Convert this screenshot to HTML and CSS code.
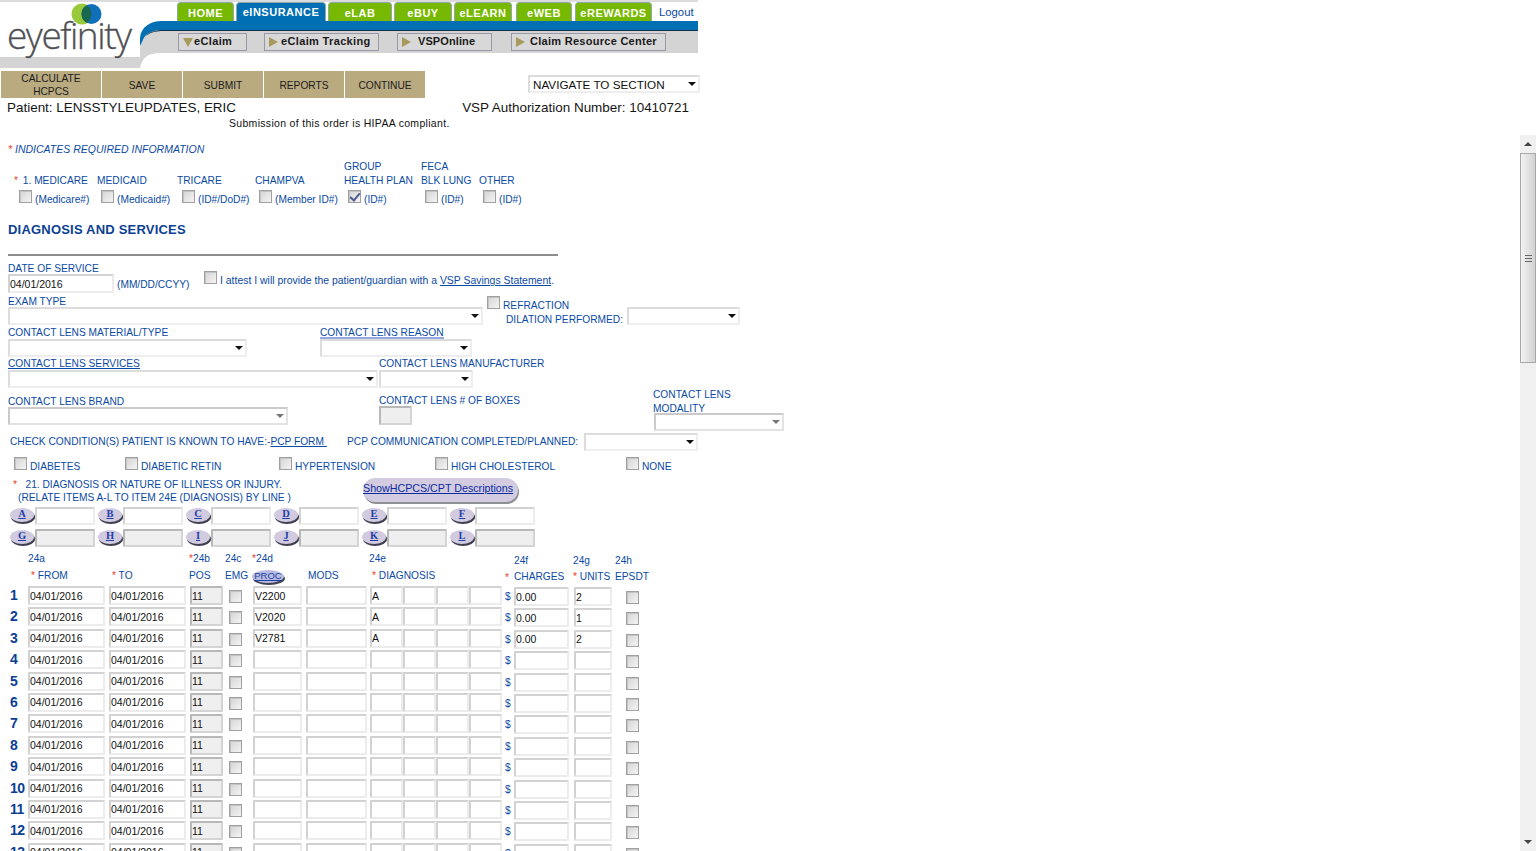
FILE: index.html
```html
<!DOCTYPE html>
<html lang="en">
<head>
    <meta charset="UTF-8">
    <title>eInsurance - Diagnosis and Services</title>
    <link rel="stylesheet" href="styles.css">
</head>
<body>
    <!-- Header -->
    <header class="header">
        <svg class="swoosh" width="698" height="68" viewBox="0 0 698 68">
            <path fill="#d4d4d4" d="M0 57H136L140 57V68H0Z"/>
            <path fill="#d4d4d4" d="M140 68C142 58 148 53 160 53H698V30H160C148 30 140 38 140 50Z"/>
            <path fill="#006fb4" d="M140 38C141 27 150 21 162 21H698V30H164C152 30 145 33 142 42L140 46Z"/>
            <path fill="#10304a" d="M145 37C149 32 154 30 164 30H698V31H164C154 31 149 33 145 37Z"/>
        </svg>
        <div class="logo">
            <svg class="logo-rings" width="32" height="22" viewBox="0 0 32 22">
                <circle cx="11" cy="11" r="10.5" fill="#9aca3c"/>
                <circle cx="20.5" cy="11" r="10" fill="#0f6fb8"/>
                <path fill="#17684f" d="M15.7 2.2A10.5 10.5 0 0 1 15.7 19.8A10 10 0 0 1 15.7 2.2Z"/>
            </svg>
            <span class="logo-text">eyefinity</span>
        </div>
        <div class="nav">
            <ul class="tabs">
                <li class="tab t-home">HOME</li>
                <li class="tab t-ins active">eINSURANCE</li>
                <li class="tab t-lab">eLAB</li>
                <li class="tab t-buy">eBUY</li>
                <li class="tab t-learn">eLEARN</li>
                <li class="tab t-web">eWEB</li>
                <li class="tab t-rew">eREWARDS</li>
                <li class="logout">Logout</li>
            </ul>
            <div class="subnav">
                <a class="subbtn s-claim"><i class="tri-down"></i>eClaim</a>
                <a class="subbtn s-track"><i class="tri-right"></i>eClaim Tracking</a>
                <a class="subbtn s-vsp"><i class="tri-right"></i>VSP Online</a>
                <a class="subbtn s-res"><i class="tri-right"></i>Claim Resource Center</a>
            </div>
        </div>
    </header>

    <!-- Toolbar -->
    <div class="toolbar">
        <button class="tool">CALCULATE<br>HCPCS</button>
        <button class="tool">SAVE</button>
        <button class="tool">SUBMIT</button>
        <button class="tool">REPORTS</button>
        <button class="tool">CONTINUE</button>
        <span class="sel sel-nav"><select><option>NAVIGATE TO SECTION</option></select></span>
    </div>

    <div class="patient">
        <span>Patient: LENSSTYLEUPDATES, ERIC</span>
        <span>VSP Authorization Number: 10410721</span>
    </div>
    <div class="notice">Submission of this order is HIPAA compliant.</div>

    <div class="required"><b>*</b> INDICATES REQUIRED INFORMATION</div>

    <!-- Insurance type -->
    <div class="ins-types">
        <div class="ins c1"><label><b>*</b> 1. MEDICARE</label><span><input type="checkbox"> (Medicare#)</span></div>
        <div class="ins c2"><label>MEDICAID</label><span><input type="checkbox"> (Medicaid#)</span></div>
        <div class="ins c3"><label>TRICARE</label><span><input type="checkbox"> (ID#/DoD#)</span></div>
        <div class="ins c4"><label>CHAMPVA</label><span><input type="checkbox"> (Member ID#)</span></div>
        <div class="ins c5"><label>GROUP<br>HEALTH PLAN</label><span><input type="checkbox" checked> (ID#)</span></div>
        <div class="ins c6"><label>FECA<br>BLK LUNG</label><span><input type="checkbox"> (ID#)</span></div>
        <div class="ins c7"><label>OTHER</label><span><input type="checkbox"> (ID#)</span></div>
    </div>

    <h2 class="section-title">DIAGNOSIS AND SERVICES</h2>
    <hr class="rule">

    <div class="f-date">
        <div class="date-col">
            <label>DATE OF SERVICE</label>
            <div class="date-line"><input class="txt date-in" value="04/01/2016"><span class="hint">(MM/DD/CCYY)</span></div>
        </div>
        <div class="attest"><input type="checkbox"> <span>I attest I will provide the patient/guardian with a <a>VSP Savings Statement</a>.</span></div>
    </div>

    <div class="f-exam">
        <div class="exam-col">
            <label>EXAM TYPE</label>
            <span class="sel sel-exam"><select></select></span>
        </div>
        <div class="refr-col">
            <div class="refr-top"><input type="checkbox"> <span>REFRACTION</span></div>
            <div class="refr-bot">DILATION PERFORMED:</div>
        </div>
        <span class="sel sel-dil"><select></select></span>
    </div>

    <div class="f-mat">
        <div class="mat-col">
            <label>CONTACT LENS MATERIAL/TYPE</label>
            <span class="sel sel-mat"><select></select></span>
        </div>
        <div>
            <label><a class="thick">CONTACT LENS REASON</a></label>
            <span class="sel sel-rea"><select></select></span>
        </div>
    </div>

    <div class="f-serv">
        <div class="serv-col">
            <label><a>CONTACT LENS SERVICES</a></label>
            <span class="sel sel-serv"><select></select></span>
        </div>
        <div>
            <label>CONTACT LENS MANUFACTURER</label>
            <span class="sel sel-manu"><select></select></span>
        </div>
    </div>

    <div class="f-brand">
        <div class="brand-col">
            <label>CONTACT LENS BRAND</label>
            <span class="sel sel-brand off"><select disabled></select></span>
        </div>
        <div class="box-col">
            <label>CONTACT LENS # OF BOXES</label>
            <input class="txt off box-in" disabled>
        </div>
        <div class="mod-col">
            <label>CONTACT LENS<br>MODALITY</label>
            <span class="sel sel-mod off"><select disabled></select></span>
        </div>
    </div>

    <div class="f-cond">
        <span class="cond-a">CHECK CONDITION(S) PATIENT IS KNOWN TO HAVE:-<a>PCP FORM&nbsp;</a></span>
        <span class="cond-b">PCP COMMUNICATION COMPLETED/PLANNED:</span>
        <span class="sel sel-pcp"><select></select></span>
    </div>

    <div class="f-checks">
        <span class="ck c-a"><input type="checkbox"> DIABETES</span>
        <span class="ck c-b"><input type="checkbox"> DIABETIC RETIN</span>
        <span class="ck c-c"><input type="checkbox"> HYPERTENSION</span>
        <span class="ck c-d"><input type="checkbox"> HIGH CHOLESTEROL</span>
        <span class="ck c-e"><input type="checkbox"> NONE</span>
    </div>

    <div class="f-diag">
        <div class="diag-text">
            <div><b>*</b>&nbsp;&nbsp; 21. DIAGNOSIS OR NATURE OF ILLNESS OR INJURY.</div>
            <div class="diag-sub">(RELATE ITEMS A-L TO ITEM 24E (DIAGNOSIS) BY LINE )</div>
        </div>
        <a class="show-btn">ShowHCPCS/CPT Descriptions</a>
    </div>

    <div class="codes" id="codes"></div>

    <!-- Line items -->
    <div class="lines-head">
        <span class="h-a">24a<br><em><b>*</b> FROM</em></span>
        <span class="h-to"><em><b>*</b> TO</em></span>
        <span class="h-b"><b>*</b>24b<br><em>POS</em></span>
        <span class="h-c">24c<br><em>EMG</em></span>
        <span class="h-d"><b>*</b>24d<br><a class="pill proc">PROC</a></span>
        <span class="h-m"><em>MODS</em></span>
        <span class="h-e">24e<br><em><b>*</b> DIAGNOSIS</em></span>
        <span class="h-f low"><i class="h-star"><b>*</b></i>24f<br><em>CHARGES</em></span>
        <span class="h-g low">24g<br><em><b>*</b> UNITS</em></span>
        <span class="h-h low">24h<br><em>EPSDT</em></span>
    </div>
    <div class="lines" id="lines"></div>

    <!-- Frame scrollbar -->
    <div class="scrollbar">
        <div class="sb-btn"><i class="sb-up"></i></div>
        <div class="sb-thumb"><i></i></div>
        <div class="sb-track"></div>
        <div class="sb-btn"><i class="sb-down"></i></div>
    </div>

    <script>
        const first = ['A', 'B', 'C', 'D', 'E', 'F'];
        const second = ['G', 'H', 'I', 'J', 'K', 'L'];
        const rowData = [
            { proc: 'V2200', diag: 'A', charge: '0.00', units: '2' },
            { proc: 'V2020', diag: 'A', charge: '0.00', units: '1' },
            { proc: 'V2781', diag: 'A', charge: '0.00', units: '2' }
        ];

        let codeHtml = '';
        first.forEach(l => { codeHtml += `<a class="pill">${l}</a><input class="txt code">`; });
        second.forEach(l => { codeHtml += `<a class="pill">${l}</a><input class="txt code off" disabled>`; });
        document.getElementById('codes').innerHTML = codeHtml;

        let lineHtml = '';
        for (let i = 1; i <= 13; i++) {
            const d = rowData[i - 1] || { proc: '', diag: '', charge: '', units: '' };
            lineHtml += `<div class="line">
                <span class="num">${i}</span>
                <input class="txt w-date" value="04/01/2016">
                <input class="txt w-date m4" value="04/01/2016">
                <input class="txt w-pos off m4" value="11" disabled>
                <span class="emg"><input type="checkbox"></span>
                <input class="txt w-proc" value="${d.proc}">
                <input class="txt w-mods m4">
                <input class="txt w-dg m3" value="${d.diag}">
                <input class="txt w-dg">
                <input class="txt w-dg">
                <input class="txt w-dg">
                <span class="dollar">$</span>
                <input class="txt w-chg" value="${d.charge}">
                <input class="txt w-unit" value="${d.units}">
                <span class="eps"><input type="checkbox"></span>
            </div>`;
        }
        document.getElementById('lines').innerHTML = lineHtml;
    </script>
</body>
</html>
```

FILE: styles.css
```css
* {
    box-sizing: border-box;
    margin: 0;
    padding: 0;
}

html, body {
    height: 851px;
    overflow: hidden;
}

body {
    font-family: "Liberation Sans", Arial, sans-serif;
    font-size: 10.2px;
    color: #0b4aa5;
    background: #fff;
    position: relative;
    line-height: 14px;
}

b {
    color: #e8401c;
    font-weight: normal;
}

a {
    text-decoration: underline;
}

label {
    display: block;
    padding-top: 1px;
}

/* Header */
.header {
    width: 698px;
    height: 68px;
    display: flex;
    position: relative;
    border-top: 2px solid #dcdcdc;
}

.swoosh {
    position: absolute;
    left: 0;
    top: -2px;
}

.logo {
    width: 140px;
    position: relative;
    z-index: 1;
}

.logo-rings {
    position: absolute;
    left: 71px;
    top: 1px;
}

.logo-text {
    position: absolute;
    left: 7px;
    top: 10px;
    font-family: "Open Sans", sans-serif;
    font-weight: 300;
    font-size: 37px;
    line-height: 46px;
    letter-spacing: -1.45px;
    color: #4f5054;
    -webkit-text-stroke: 0.3px #4f5054;
}

.nav {
    position: relative;
    flex: 1;
}

.tabs {
    list-style: none;
    display: flex;
    height: 19px;
    padding-left: 37px;
}

.tab {
    background: #76b900;
    color: #fff;
    font-weight: bold;
    font-size: 11px;
    letter-spacing: 0.5px;
    text-align: center;
    line-height: 20px;
    border: 1px solid #8fa8a8;
    border-bottom: 0;
    border-radius: 4px 4px 0 0;
}

.tab.active {
    background: #006fb4;
    line-height: 19px;
}

.t-home { width: 57px; margin-right: 2px; }
.t-ins { width: 90px; margin-right: 2px; }
.t-lab { width: 64px; margin-right: 2px; }
.t-buy { width: 58px; margin-right: 2px; }
.t-learn { width: 58px; margin-right: 4px; }
.t-web { width: 56px; margin-right: 3px; }
.t-rew { width: 77px; }

.logout {
    margin-left: 7px;
    font-size: 11.3px;
    line-height: 21px;
    color: #0b4aa5;
}

.subnav {
    display: flex;
    margin-top: 12px;
    height: 18px;
}

.subbtn {
    display: flex;
    align-items: center;
    height: 18px;
    padding-bottom: 2px;
    background: #d8d8d8;
    border: 1px solid #9a98a8;
    color: #1a1a1a;
    font-weight: bold;
    font-size: 11px;
    letter-spacing: 0.35px;
    text-decoration: none;
}

.s-claim { margin-left: 38px; width: 69px; padding-left: 4px; }
.s-track { margin-left: 17px; width: 115px; padding-left: 4px; }
.s-vsp { margin-left: 18px; width: 95px; padding-left: 4px; word-spacing: -3px; letter-spacing: 0.1px; }
.s-res { margin-left: 19px; width: 155px; padding-left: 4px; letter-spacing: 0.28px; }

.tri-down {
    width: 0;
    height: 0;
    border-left: 5px solid transparent;
    border-right: 5px solid transparent;
    border-top: 9px solid #a89a5c;
    margin: 2px 1px 0 0;
}

.tri-right {
    width: 0;
    height: 0;
    border-top: 5px solid transparent;
    border-bottom: 5px solid transparent;
    border-left: 9px solid #a89a5c;
    margin: 2px 3px 0 0;
}

.s-vsp .tri-right { margin-right: 7px; }
.s-res .tri-right { margin-right: 5px; }

/* Toolbar */
.toolbar {
    display: flex;
    gap: 1px;
    margin: 3px 0 0 1px;
    height: 27px;
}

.tool {
    width: 80px;
    background: #b9aa80;
    border: 0;
    padding-top: 2px;
    font-family: inherit;
    font-size: 10.2px;
    line-height: 13px;
    color: #1c1c1c;
}

.tool:first-child {
    width: 100px;
    padding-top: 0;
}

.sel-nav {
    margin: 4px 0 0 102px;
    width: 172px;
    height: 19px;
}

.sel-nav select {
    font-size: 11.7px;
    color: #111;
    padding-top: 1px;
}

/* Select boxes */
.sel {
    display: block;
    position: relative;
    height: 18px;
}

.sel select {
    appearance: none;
    width: 100%;
    height: 100%;
    display: block;
    background: #fff;
    border: 2px solid;
    border-color: #dcdcdc #eeeeee #eeeeee #dcdcdc;
    font-family: inherit;
    padding-left: 3px;
}

.sel::after {
    content: "";
    position: absolute;
    right: 4px;
    top: 7px;
    border-left: 4px solid transparent;
    border-right: 4px solid transparent;
    border-top: 4px solid #111;
}

.sel.off select {
    border-color: #b4b4b4 #d8d8d8 #d8d8d8 #b4b4b4;
}

.sel.off::after {
    border-top-color: #777;
}

.patient {
    display: flex;
    justify-content: space-between;
    width: 689px;
    padding-left: 7px;
    height: 18px;
    line-height: 20px;
    font-size: 13.45px;
    color: #151515;
}

.notice {
    padding-left: 229px;
    height: 15px;
    line-height: 15px;
    font-size: 10.5px;
    color: #111;
    letter-spacing: 0.31px;
}

.required {
    margin: 11px 0 0 8px;
    height: 14px;
    font-size: 10.5px;
    font-style: italic;
}

/* Insurance types */
.ins-types {
    display: flex;
    align-items: flex-end;
    margin-top: 3px;
    height: 50px;
}

.ins label {
    padding-top: 0;
    line-height: 14px;
    margin-bottom: 1px;
}

.ins label b {
    margin-right: 2px;
}

.ins > span {
    display: flex;
    align-items: flex-start;
    height: 20px;
    padding-top: 4px;
    gap: 3px;
}

.ins > span input {
    margin-top: -3px;
}

.c1 { width: 83px; margin-left: 14px; }
.c1 > span { margin-left: 5px; }
.c2 { width: 80px; }
.c2 > span { margin-left: 4px; }
.c3 { width: 78px; }
.c3 > span { margin-left: 5px; }
.c4 { width: 89px; }
.c4 > span { margin-left: 4px; }
.c5 { width: 77px; }
.c5 > span { margin-left: 4px; }
.c6 { width: 58px; }
.c6 > span { margin-left: 4px; }
.c7 { width: 50px; }
.c7 > span { margin-left: 4px; }

.section-title {
    margin: 12px 0 0 8px;
    font-size: 13px;
    letter-spacing: 0.2px;
    line-height: 17px;
    color: #0b3f94;
    height: 17px;
}

.rule {
    margin: 16px 0 0 8px;
    width: 550px;
    height: 2px;
    border: 0;
    background: #8c8c8c;
}

/* Form rows */
.txt {
    display: block;
    height: 19px;
    border: 2px solid;
    border-color: #d2d2d2 #ececec #ececec #d2d2d2;
    background: #fff;
    font-family: inherit;
    font-size: 10.5px;
    color: #111;
    padding-left: 0;
    border-radius: 1px;
}

.txt.off {
    background: #efefef;
    border-color: #b8b8b8 #d4d4d4 #d4d4d4 #b8b8b8;
}

.f-date {
    display: flex;
    margin: 5px 0 0 8px;
    height: 33px;
}

.date-col {
    width: 196px;
}

.date-col label {
    height: 13px;
    line-height: 14px;
}

.date-line {
    display: flex;
}

.date-in {
    width: 106px;
}

.hint {
    margin: 4px 0 0 3px;
}

.attest {
    display: flex;
    margin-top: 10px;
    gap: 3px;
    height: 16px;
    font-size: 10.45px;
}

.attest span {
    margin-top: 3px;
}

.f-exam {
    display: flex;
    margin: 0 0 0 8px;
    height: 31px;
}

.exam-col {
    width: 479px;
}

.exam-col label {
    height: 13px;
}

.sel-exam {
    width: 475px;
}

.refr-col {
    width: 140px;
}

.refr-top {
    display: flex;
    gap: 3px;
    padding-top: 2px;
    height: 16px;
}

.refr-top span {
    margin-top: 3px;
}

.refr-bot {
    margin: 3px 0 0 19px;
}

.sel-dil {
    width: 113px;
    margin: 13px 0 0 0;
}

.f-mat {
    display: flex;
    margin-left: 8px;
    height: 31px;
}

.mat-col {
    width: 312px;
}

.f-mat label,
.f-serv label {
    height: 14px;
    line-height: 14px;
}

.sel-mat { width: 239px; }
.sel-rea { width: 152px; }

.thick {
    text-decoration: none;
    border-bottom: 2px solid #98a8de;
    display: block;
    width: fit-content;
    height: 13px;
}

.f-serv {
    display: flex;
    margin-left: 8px;
    height: 37px;
}

.serv-col {
    width: 371px;
}

.sel-serv { width: 370px; }
.sel-manu { width: 94px; }

.f-brand {
    display: flex;
    margin-left: 8px;
    height: 40px;
}

.brand-col {
    width: 371px;
    padding-top: 1px;
}

.brand-col label {
    height: 13px;
}

.sel-brand { width: 280px; }

.box-col {
    width: 274px;
}

.box-col label {
    height: 13px;
}

.box-in {
    width: 33px;
}

.mod-col {
    width: 131px;
    margin-top: -6px;
}

.mod-col label {
    height: 26px;
    line-height: 14px;
}

.sel-mod {
    width: 130px;
    margin-left: 1px;
}

.f-cond {
    display: flex;
    margin-left: 10px;
    height: 23px;
    align-items: flex-start;
    white-space: nowrap;
}

.cond-a {
    width: 337px;
    padding-top: 2px;
}

.cond-b {
    width: 237px;
    padding-top: 2px;
}

.sel-pcp {
    width: 114px;
}

.f-checks {
    display: flex;
    margin-left: 14px;
    height: 21px;
}

.ck {
    display: flex;
    gap: 3px;
    padding-top: 1px;
    line-height: 20px;
}

.c-a { width: 111px; }
.c-b { width: 154px; }
.c-c { width: 156px; }
.c-d { width: 191px; }

.f-diag {
    display: flex;
    margin-left: 13px;
    height: 31px;
}

.diag-text {
    width: 350px;
    padding-top: 1px;
    line-height: 13px;
}

.diag-sub {
    margin-left: 5px;
}

.show-btn {
    display: block;
    width: 155px;
    height: 24px;
    line-height: 20px;
    border-radius: 12px;
    background: #d3cce0;
    box-shadow: 1px 2px 0 #8f8f94;
    color: #0a2aa0;
    font-size: 10.7px;
    margin-top: 1px;
}

/* A-L code boxes */
.codes {
    display: grid;
    grid-template-columns: repeat(6, 25px 63px);
    grid-auto-rows: 18px;
    row-gap: 4px;
    margin: -1px 0 0 10px;
    width: 540px;
}

.code {
    width: 60px;
    height: 18px;
}

.pill {
    display: block;
    width: 24px;
    height: 14px;
    margin-top: 1px;
    border-radius: 50%;
    background: #d2cbe0;
    box-shadow: 1px 2px 0 #3f4050;
    font-family: "Liberation Serif", serif;
    font-weight: bold;
    font-size: 10.5px;
    line-height: 12px;
    text-align: center;
    color: #1f3fa8;
}

.proc {
    display: inline-block;
    width: 32px;
    font-family: "Liberation Sans", sans-serif;
    font-weight: normal;
    font-size: 9.5px;
    line-height: 11px;
    height: 13px;
    background: #b9bde0;
}

/* Line items */
.lines-head {
    display: flex;
    height: 39px;
    margin-top: 3px;
    padding-left: 28px;
}

.lines-head span {
    display: block;
    line-height: 17px;
    padding-top: 0;
}

.lines-head em {
    font-style: normal;
}

.h-a { width: 81px; }
.h-a em { margin-left: 3px; }
.h-to { width: 80px; padding-top: 17px !important; }
.h-to em { margin-left: 3px; }
.h-b { width: 36px; }
.h-c { width: 27px; }
.h-d { width: 56px; }
.h-m { width: 61px; padding-top: 17px !important; }
.h-e { width: 145px; }
.h-e em { margin-left: 3px; }
.h-f { width: 59px; position: relative; }
.h-g { width: 42px; }
.h-h { width: 40px; }
.low { padding-top: 3px !important; line-height: 16px !important; }

.h-star {
    position: absolute;
    left: -9px;
    top: 20px;
    font-style: normal;
}

.lines {
    margin-top: -3px;
}

.line {
    display: flex;
    align-items: flex-start;
    height: 21.4px;
    padding-left: 10px;
}

.num {
    width: 18px;
    font-size: 14px;
    font-weight: bold;
    color: #0b3f94;
    line-height: 19px;
}

.line:nth-child(n+10) .num {
    letter-spacing: -0.5px;
}

.m4 { margin-left: 4px; }
.m3 { margin-left: 3px; }

.w-date { width: 77px; }
.w-pos { width: 33px; }
.w-proc { width: 49px; }
.w-mods { width: 61px; }
.w-dg { width: 33px; }
.w-chg { width: 55px; margin-top: 1px; }
.w-unit { width: 38px; margin: 1px 0 0 5px; }

.emg {
    width: 30px;
    padding: 4px 0 0 6px;
}

.dollar {
    width: 9px;
    margin-left: 3px;
    padding-top: 4px;
}

.eps {
    padding: 5px 0 0 14px;
}

/* Checkboxes */
input[type="checkbox"] {
    appearance: none;
    display: block;
    position: relative;
    flex: none;
    width: 13px;
    height: 13px;
    border: 1px solid #a0a0a0;
    background: linear-gradient(135deg, #d4d4d4, #f4f4f4);
    box-shadow: inset 1px 1px 0 #c4c4c4;
}

input[type="checkbox"]:checked::after {
    content: "";
    position: absolute;
    left: 3px;
    top: 0;
    width: 4px;
    height: 8px;
    border: solid #4d5f90;
    border-width: 0 2px 2px 0;
    transform: rotate(40deg);
}

/* Scrollbar */
.scrollbar {
    position: absolute;
    left: 1520px;
    top: 135px;
    width: 16px;
    height: 716px;
    display: flex;
    flex-direction: column;
    background: #f0f0f0;
}

.sb-btn {
    height: 18px;
    display: flex;
    align-items: center;
    justify-content: center;
}

.sb-up {
    border-left: 4px solid transparent;
    border-right: 4px solid transparent;
    border-bottom: 4px solid #444;
}

.sb-down {
    border-left: 4px solid transparent;
    border-right: 4px solid transparent;
    border-top: 4px solid #444;
}

.sb-thumb {
    height: 210px;
    border: 1px solid #a8a8a8;
    background: linear-gradient(90deg, #f2f2f2, #d2d2d2);
    display: flex;
    align-items: center;
    justify-content: center;
}

.sb-thumb i {
    width: 7px;
    height: 7px;
    border-top: 1px solid #666;
    border-bottom: 1px solid #666;
    background: linear-gradient(#666, #666) center / 100% 1px no-repeat;
}

.sb-track {
    flex: 1;
}
```
